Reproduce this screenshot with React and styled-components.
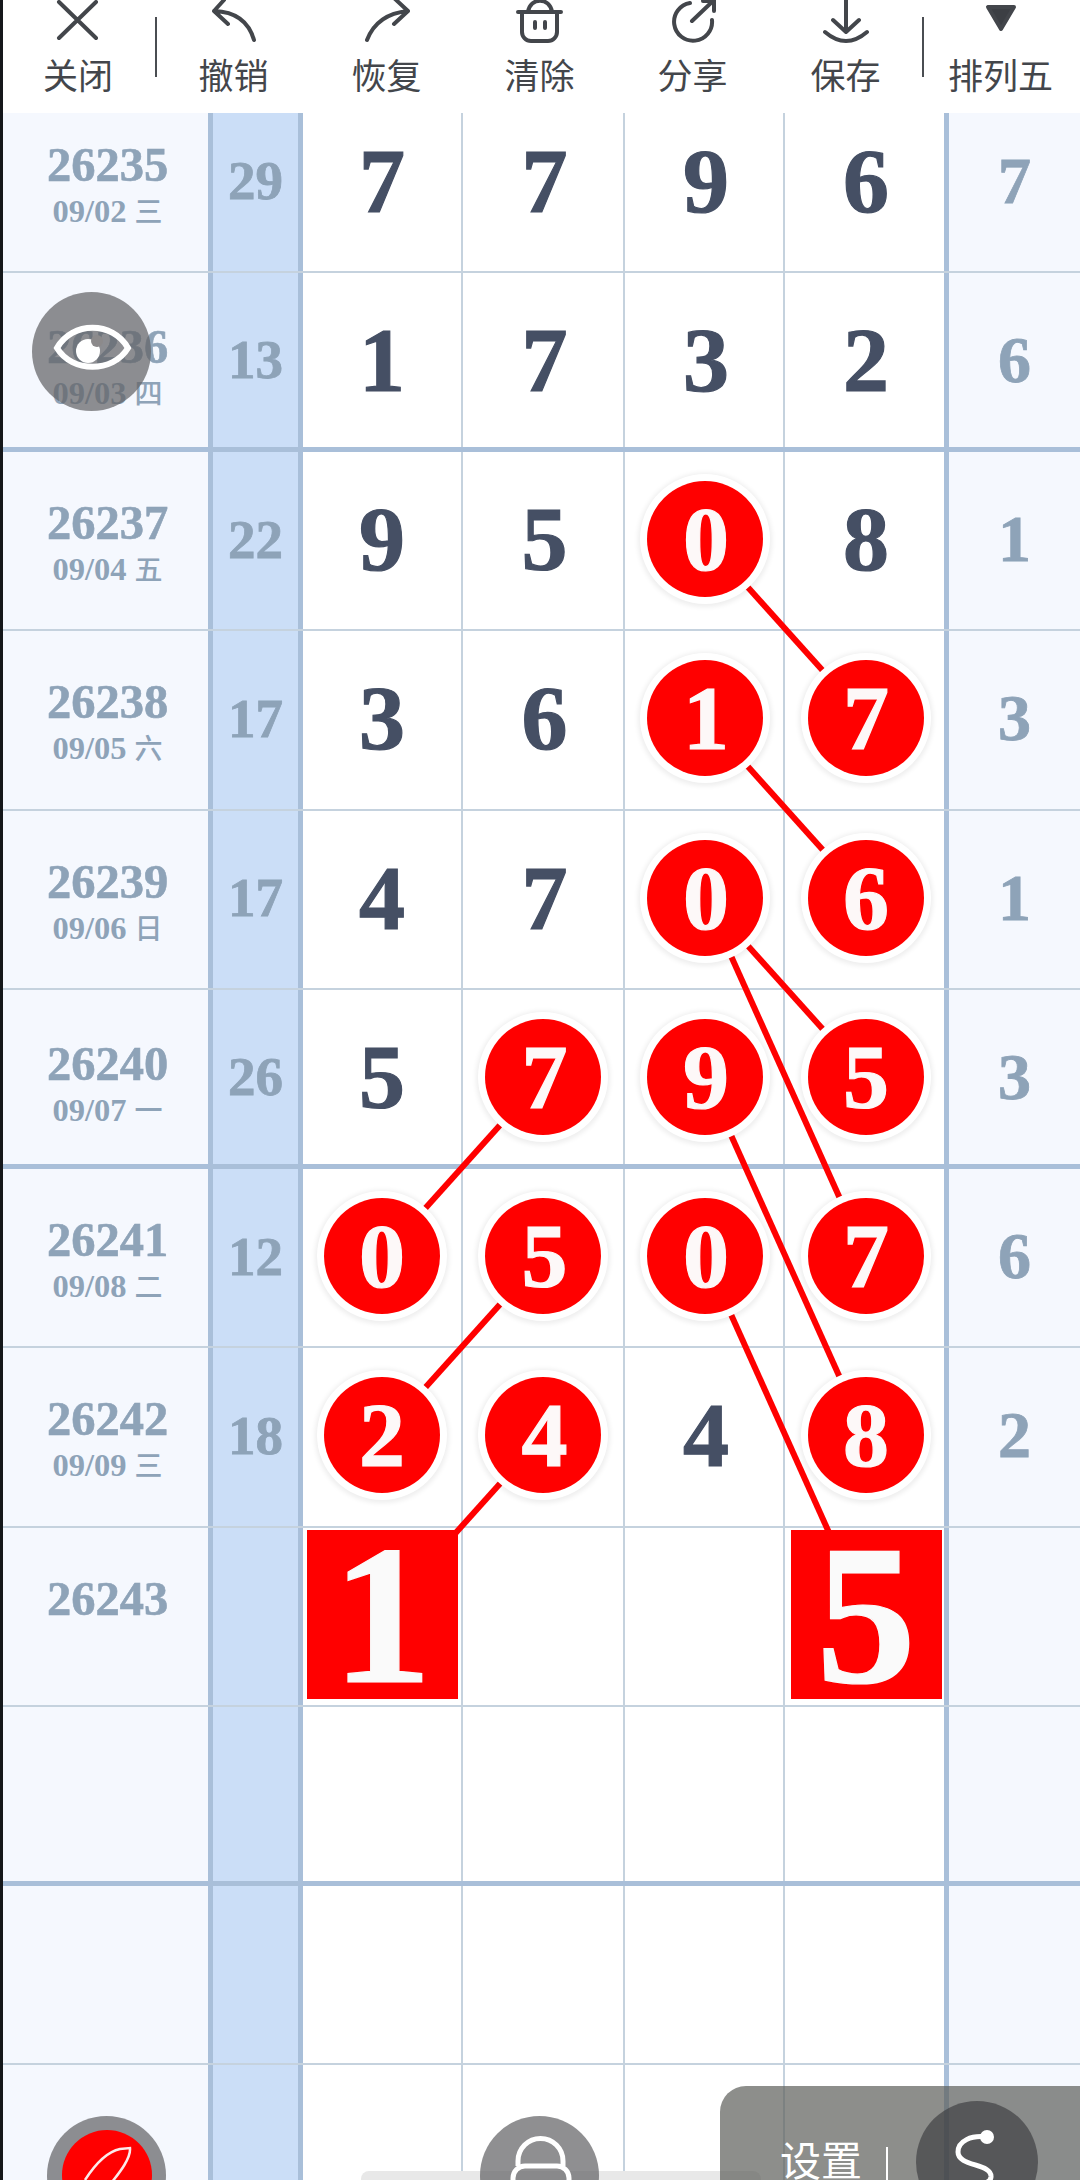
import React from 'react';
import styled, { createGlobalStyle } from 'styled-components';

const SERIF = '"Liberation Serif", "Noto Sans CJK SC", serif';
const SANS = '"Noto Sans CJK SC", "Noto Sans", sans-serif';
const ROW_H = 179.25;
const COL_X = [379, 540, 702, 863]; // digit column centres, from the left of the sheet

const GlobalStyle = createGlobalStyle`
  html, body { margin: 0; padding: 0; background: #fff; overflow: hidden; }
  * { box-sizing: border-box; }
`;

const Screen = styled.div`
  position: relative;
  width: 1080px;
  height: 2180px;
  overflow: hidden;
  border-left: 3px solid #15171a;
  display: flex;
  flex-direction: column;
  background: #fff;
`;

const Toolbar = styled.div`
  flex: 0 0 113px;
  display: flex;
  align-items: flex-start;
  background: #fff;
  overflow: hidden;
`;

const ToolItem = styled.div`
  flex: 0 0 ${(p) => p.$width || 153}px;
  display: flex;
  flex-direction: column;
  align-items: center;
`;

const ToolIcon = styled.svg`
  display: block;
  width: 60px;
  height: 44px;
  overflow: hidden;
  fill: none;
  stroke: #43464b;
  stroke-width: 4;
  stroke-linecap: round;
  stroke-linejoin: round;
`;

const ToolLabel = styled.span`
  margin-top: 13px;
  font: 400 35px/34px ${SANS};
  color: #43464b;
  white-space: nowrap;
`;

const ToolDivider = styled.div`
  flex: 0 0 2px;
  height: 60px;
  margin: 17px 0 0 ${(p) => p.$gap || 0}px;
  background: #4a4d52;
`;

const Board = styled.div`
  flex: 1;
  overflow: hidden;
`;

const Sheet = styled.div`
  position: relative;
  margin-top: -19.5px;
`;

const Row = styled.div`
  --nudge: ${(p) => (p.$major ? '3px' : '0px')};
  display: grid;
  grid-template-columns: 210px 90px 160px 162px 160px 164px 131px;
  height: ${ROW_H}px;
  border-bottom: ${(p) => (p.$major ? '5px solid #a9bfd9' : '2px solid #c5d2de')};
`;

const IssueCell = styled.div`
  display: flex;
  flex-direction: column;
  align-items: center;
  padding: calc(47px + var(--nudge)) 0 0 4px;
  background: #f5f8fe;
  border-right: 5px solid #a9bfd9;
  color: #8ea3b8;
`;

const IssueNo = styled.div`
  font: 700 48.5px/47px ${SERIF};
  -webkit-text-stroke: 0.6px currentColor;
`;

const IssueDate = styled.div`
  margin-top: 6px;
  font: 700 32.5px/32px ${SERIF};
`;

const Weekday = styled.span`
  font: 500 28px/32px ${SANS};
`;

const SumCell = styled.div`
  display: flex;
  align-items: center;
  justify-content: center;
  padding: var(--nudge) 0 3px;
  background: #cbdef7;
  border-right: 5px solid #a9bfd9;
  color: #8ea3b8;
  font: 700 55px/1 ${SERIF};
  -webkit-text-stroke: 0.8px currentColor;
`;

const DigitCell = styled.div`
  display: flex;
  align-items: center;
  justify-content: center;
  padding: var(--nudge) 0 3px ${(p) => p.$inset}px;
  background: #fff;
  border-right: ${(p) => (p.$last ? '5px solid #a9bfd9' : '2px solid #c5d2de')};
  color: #454f64;
  font: 700 92px/1 ${SERIF};
  text-indent: ${(p) => p.$shift}px;
  -webkit-text-stroke: 1.2px currentColor;
`;

const Ball = styled.div`
  position: relative;
  z-index: 2;
  width: 116px;
  height: 116px;
  border-radius: 50%;
  display: flex;
  align-items: center;
  justify-content: center;
  background: #f00;
  color: #fdf8f8;
  box-shadow: 0 0 0 7px #fff, 0 1px 5px 9px rgba(0, 0, 0, 0.07);
`;

const Block = styled.div`
  position: relative;
  z-index: 2;
  width: 151px;
  height: 169px;
  display: flex;
  align-items: center;
  justify-content: center;
  background: #f00;
  color: #fafafa;
  font-size: 200px;
`;

const TailCell = styled.div`
  display: flex;
  align-items: center;
  justify-content: center;
  padding: var(--nudge) 0 3px;
  background: #f5f8fe;
  color: #8ea3b8;
  font: 700 66px/1 ${SERIF};
  -webkit-text-stroke: 0.8px currentColor;
`;

const Links = styled.svg`
  position: absolute;
  top: 0;
  left: 0;
  z-index: 1;
  width: 1077px;
  height: 2200px;
  stroke: #f00;
  stroke-width: 6;
  pointer-events: none;
`;

const RoundButton = styled.div`
  position: absolute;
  z-index: 5;
  left: ${(p) => p.$x}px;
  top: ${(p) => p.$y}px;
  width: 119px;
  height: 119px;
  border-radius: 50%;
  background: rgba(100, 100, 102, 0.72);
  svg { display: block; width: 119px; height: 119px; fill: none; stroke: #fff; stroke-width: 5; }
`;

const PenDot = styled.div`
  margin: 14px auto 0;
  width: 90px;
  height: 90px;
  border-radius: 50%;
  background: #f00;
  svg { width: 90px; height: 90px; stroke-width: 2.5; stroke: #fbeaea; }
`;

const HomeBar = styled.div`
  position: absolute;
  z-index: 4;
  left: 358px;
  top: 2171px;
  width: 400px;
  height: 20px;
  border-radius: 8px;
  background: #e8e8e8;
`;

const SettingsPanel = styled.div`
  position: absolute;
  z-index: 5;
  left: 717px;
  top: 2086px;
  width: 370px;
  height: 110px;
  padding: 15px 0 0 60px;
  display: flex;
  align-items: flex-start;
  border-radius: 26px 0 0 0;
  background: rgba(92, 94, 90, 0.7);
`;

const SettingsText = styled.span`
  margin-top: 35px;
  font: 400 41px/44px ${SANS};
  color: #fff;
`;

const SettingsBar = styled.div`
  width: 2px;
  height: 40px;
  margin: 46px 28px 0 24px;
  background: #fff;
`;

const SettingsKnob = styled.div`
  width: 122px;
  height: 122px;
  border-radius: 50%;
  background: rgba(55, 55, 58, 0.62);
  svg { display: block; width: 122px; height: 122px; fill: none; stroke: #fff; stroke-width: 5; stroke-linecap: round; }
`;

const ROWS = [
  { no: '26235', date: '09/02', day: '三', sum: 29, nums: [7, 7, 9, 6], tail: 7 },
  { no: '26236', date: '09/03', day: '四', sum: 13, nums: [1, 7, 3, 2], tail: 6, major: true },
  { no: '26237', date: '09/04', day: '五', sum: 22, nums: [9, 5, 0, 8], hits: [2], tail: 1 },
  { no: '26238', date: '09/05', day: '六', sum: 17, nums: [3, 6, 1, 7], hits: [2, 3], tail: 3 },
  { no: '26239', date: '09/06', day: '日', sum: 17, nums: [4, 7, 0, 6], hits: [2, 3], tail: 1 },
  { no: '26240', date: '09/07', day: '一', sum: 26, nums: [5, 7, 9, 5], hits: [1, 2, 3], tail: 3, major: true },
  { no: '26241', date: '09/08', day: '二', sum: 12, nums: [0, 5, 0, 7], hits: [0, 1, 2, 3], tail: 6 },
  { no: '26242', date: '09/09', day: '三', sum: 18, nums: [2, 4, 4, 8], hits: [0, 1, 3], tail: 2 },
  { no: '26243', blocks: { 0: 1, 3: 5 }, nums: ['', '', '', ''] },
  { nums: ['', '', '', ''], major: true },
  { nums: ['', '', '', ''] },
  { nums: ['', '', '', ''] },
];

// [col, row] pairs joined by a red line
const LINKS = [
  [2, 2, 3, 3],
  [2, 3, 3, 4],
  [2, 4, 3, 5],
  [2, 4, 3, 6],
  [2, 5, 3, 7],
  [2, 6, 3, 8],
  [1, 5, 0, 6],
  [1, 6, 0, 7],
  [1, 7, 0, 8],
];

const CELL_INSET = [0, 0, 1, 3];
const TEXT_SHIFT = [0, 3, 3, 0];

const rowCentre = (r) => ROW_H * r + 87;

const TOOLS = [
  {
    label: '撤销',
    icon: <path d="M20 0 L10 11 L24 24 M10 11 Q42 12 50 40" />,
  },
  {
    label: '恢复',
    icon: <path d="M37 -2 L51 11 L37 24 M51 11 Q20 14 10 40" />,
  },
  {
    label: '清除',
    icon: (
      <path d="M8 12 H51 M12 12 V32 a9 9 0 0 0 9 9 h17 a9 9 0 0 0 9 -9 V12 M18 12 C20 -3 40 -3 42 12 M25 22 v6 M35 22 v6" />
    ),
  },
  {
    label: '分享',
    icon: <path d="M27 3 A19 19 0 1 0 49 20 M29 21 L51 0 M40 1 H51 V11" />,
  },
  {
    label: '保存',
    icon: <path d="M30 0 V32 M17 20 L30 32 L43 20 M9 32 Q30 50 51 32" />,
  },
];

const ToolButton = ({ label, width, children }) => (
  <ToolItem $width={width}>
    <ToolIcon viewBox="0 0 60 44">{children}</ToolIcon>
    <ToolLabel>{label}</ToolLabel>
  </ToolItem>
);

const BoardRow = ({ row }) => {
  const { no, date, day, sum, nums, hits = [], blocks = {}, tail, major } = row;
  return (
    <Row $major={major}>
      <IssueCell>
        {no && <IssueNo>{no}</IssueNo>}
        {date && (
          <IssueDate>
            {date} <Weekday>{day}</Weekday>
          </IssueDate>
        )}
      </IssueCell>
      <SumCell>{sum}</SumCell>
      {nums.map((n, i) => (
        <DigitCell key={i} $last={i === 3} $inset={CELL_INSET[i]} $shift={TEXT_SHIFT[i]}>
          {blocks[i] !== undefined ? <Block>{blocks[i]}</Block> : hits.includes(i) ? <Ball>{n}</Ball> : n}
        </DigitCell>
      ))}
      <TailCell>{tail}</TailCell>
    </Row>
  );
};

export default function App() {
  return (
    <Screen>
      <GlobalStyle />
      <Toolbar>
        <ToolButton label="关闭" width={150}>
          <path d="M11 2 L48 38 M48 2 L11 38" />
        </ToolButton>
        <ToolDivider $gap={2} />
        {TOOLS.map((t) => (
          <ToolButton key={t.label} label={t.label}>
            {t.icon}
          </ToolButton>
        ))}
        <ToolDivider />
        <ToolButton label="排列五">
          <path d="M17 7 H43 L30 29 Z" fill="#3c3f44" />
        </ToolButton>
      </Toolbar>

      <Board>
        <Sheet>
          <Links viewBox="0 0 1077 2200">
            {LINKS.map(([c1, r1, c2, r2]) => (
              <line
                key={`${c1}-${r1}-${c2}-${r2}`}
                x1={COL_X[c1]}
                y1={rowCentre(r1)}
                x2={COL_X[c2]}
                y2={rowCentre(r2)}
              />
            ))}
          </Links>
          {ROWS.map((row, i) => (
            <BoardRow key={i} row={row} />
          ))}
        </Sheet>
      </Board>

      <RoundButton $x={29} $y={292}>
        <svg viewBox="0 0 119 119">
          <path d="M25 56 C40 29 81 29 96 56 C81 81 40 81 25 56 Z" strokeWidth="6" />
          <circle cx="56" cy="59" r="12" fill="#fff" stroke="none" />
          <circle cx="65" cy="49" r="6" fill="#8c8a8b" stroke="none" />
        </svg>
      </RoundButton>

      <RoundButton $x={44} $y={2116}>
        <PenDot>
          <svg viewBox="0 0 90 90">
            <path d="M23 50 C32 36 44 22 58 19 L68 18 C69 28 58 42 50 52 L42 66" />
          </svg>
        </PenDot>
      </RoundButton>

      <HomeBar />

      <RoundButton $x={477} $y={2116}>
        <svg viewBox="0 0 119 119">
          <path d="M38 50 V45 a22.5 22.5 0 0 1 45 0 V50" />
          <rect x="33" y="50" width="56" height="50" rx="12" />
        </svg>
      </RoundButton>

      <SettingsPanel>
        <SettingsText>设置</SettingsText>
        <SettingsBar />
        <SettingsKnob>
          <svg viewBox="0 0 122 122">
            <circle cx="71" cy="36" r="7" fill="#fff" stroke="none" />
            <path d="M71 36 C55 34 42 40 42 51 C42 66 76 62 75 76 C74 84 60 84 50 82" />
          </svg>
        </SettingsKnob>
      </SettingsPanel>
    </Screen>
  );
}
